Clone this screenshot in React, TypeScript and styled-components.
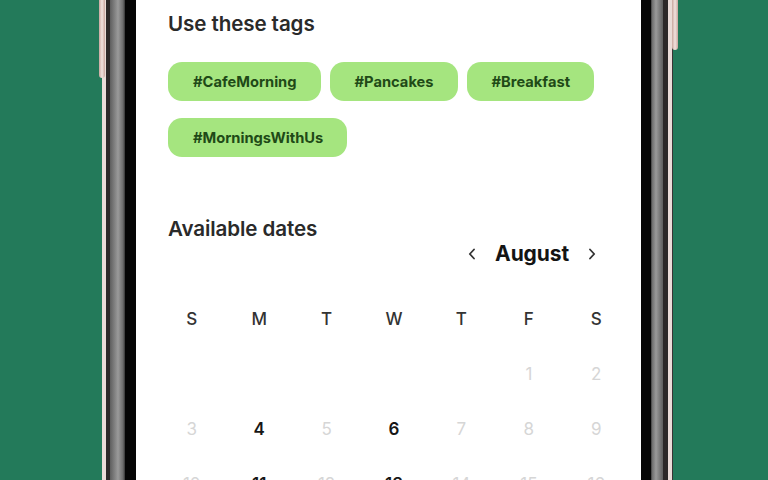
import React from "react";
import styled, { createGlobalStyle } from "styled-components";

const Global = createGlobalStyle`
  html, body { margin: 0; padding: 0; }
  body {
    background: #237a5a;
    font-family: Inter, "Noto Sans", sans-serif;
    overflow: hidden;
  }
`;

const Stage = styled.div`
  width: 768px;
  height: 480px;
  overflow: hidden;
  background: #237a5a;
  display: flex;
  align-items: flex-start;
`;

const Phone = styled.div`
  position: relative;
  margin-left: 102px;
  width: 571px;
  height: 540px;
  margin-top: -40px;
  display: flex;
  background:
    linear-gradient(90deg,
      #eadcd8 0px, #eadcd8 4px,
      #2c2828 4px, #2c2828 8px,
      #5e5e5e 8px, #9a9a9a 16px, #6c6c6c 21px, #333 23px,
      #050505 23px, #050505 34px,
      transparent 34px),
    linear-gradient(270deg,
      #3a3434 0px, #3a3434 1px,
      #eadcd8 1px, #eadcd8 5px,
      #2c2828 5px, #2c2828 10px,
      #5e5e5e 10px, #9a9a9a 17px, #6c6c6c 21px, #333 22px,
      #050505 22px, #050505 32px,
      transparent 32px);
`;

const SideButton = styled.div<{ $side: "left" | "right"; $len: number }>`
  position: absolute;
  top: 0;
  width: 6px;
  height: ${(p) => p.$len}px;
  ${(p) => (p.$side === "left" ? "left: -3px;" : "right: -5px;")}
  background: linear-gradient(90deg, #c9a69e, #f1e3df 50%, #c9a69e);
  border-radius: 0 0 3px 3px;
`;

const Screen = styled.div`
  flex: 1;
  margin: 0 32px 0 34px;
  background: #ffffff;
  padding: 52px 32px 0 32px;
  display: flex;
  flex-direction: column;
`;

const Heading = styled.h2`
  margin: 0;
  font-size: 20.6px;
  line-height: 24px;
  font-weight: 600;
  color: #2a2a2a;
  letter-spacing: -0.1px;
`;

const TagList = styled.div`
  display: flex;
  flex-wrap: wrap;
  gap: 17px 9px;
  margin-top: 26px;
`;

const Tag = styled.span`
  display: inline-flex;
  align-items: center;
  height: 39px;
  padding: 0 24px 0 25px;
  border-radius: 14px;
  background: #a5e57f;
  color: #1f4a17;
  font-size: 14.7px;
  font-weight: 700;
  box-sizing: border-box;
`;

const Divider = styled.div`
  height: 5px;
  margin: 27px 0 0 8px;
  background: #f9f9f9;
`;

const DatesHeading = styled(Heading)`
  margin-top: 33px;
`;

const MonthNav = styled.div`
  display: flex;
  justify-content: flex-end;
  align-items: center;
  gap: 19px;
  padding-right: 13px;
  height: 26px;
`;

const Month = styled.span`
  font-size: 21px;
  font-weight: 700;
  color: #141414;
  letter-spacing: -0.1px;
`;

const NavBtn = styled.span`
  display: inline-flex;
  width: 8px;
  justify-content: center;
`;

const Grid = styled.div`
  display: grid;
  grid-template-columns: repeat(7, 1fr);
  grid-auto-rows: 55px;
  margin: 25px -21px 0 -10px;
`;

const WeekDay = styled.div`
  display: flex;
  align-items: center;
  justify-content: center;
  font-size: 17px;
  font-weight: 500;
  color: #333333;
`;

const Day = styled.div<{ $on?: boolean }>`
  display: flex;
  align-items: center;
  justify-content: center;
  font-size: 17px;
  font-weight: ${(p) => (p.$on ? 600 : 400)};
  color: ${(p) => (p.$on ? "#161616" : "#d6d6d6")};
`;

const Chevron = ({ dir }: { dir: "left" | "right" }) => (
  <svg width="8" height="12" viewBox="0 0 8 12" fill="none">
    <path
      d={dir === "left" ? "M6 1.5 L1.8 6 L6 10.5" : "M2 1.5 L6.2 6 L2 10.5"}
      stroke="#333"
      strokeWidth="1.8"
      strokeLinecap="round"
      strokeLinejoin="round"
    />
  </svg>
);

const tags = ["#CafeMorning", "#Pancakes", "#Breakfast", "#MorningsWithUs"];
const weekDays = ["S", "M", "T", "W", "T", "F", "S"];
const available = new Set([4, 6, 11, 13]);

export default function App() {
  const cells: (number | null)[] = [null, null, null, null, null];
  for (let d = 1; d <= 16; d++) cells.push(d);
  return (
    <>
      <Global />
      <Stage>
        <Phone>
          <SideButton $side="left" $len={118} />
          <SideButton $side="right" $len={90} />
          <Screen>
            <Heading>Use these tags</Heading>
            <TagList>
              {tags.map((t) => (
                <Tag key={t}>{t}</Tag>
              ))}
            </TagList>
            <Divider />
            <DatesHeading>Available dates</DatesHeading>
            <MonthNav>
              <NavBtn>
                <Chevron dir="left" />
              </NavBtn>
              <Month>August</Month>
              <NavBtn>
                <Chevron dir="right" />
              </NavBtn>
            </MonthNav>
            <Grid>
              {weekDays.map((w, i) => (
                <WeekDay key={i}>{w}</WeekDay>
              ))}
              {cells.map((c, i) => (
                <Day key={i} $on={c !== null && available.has(c)}>
                  {c ?? ""}
                </Day>
              ))}
            </Grid>
          </Screen>
        </Phone>
      </Stage>
    </>
  );
}
